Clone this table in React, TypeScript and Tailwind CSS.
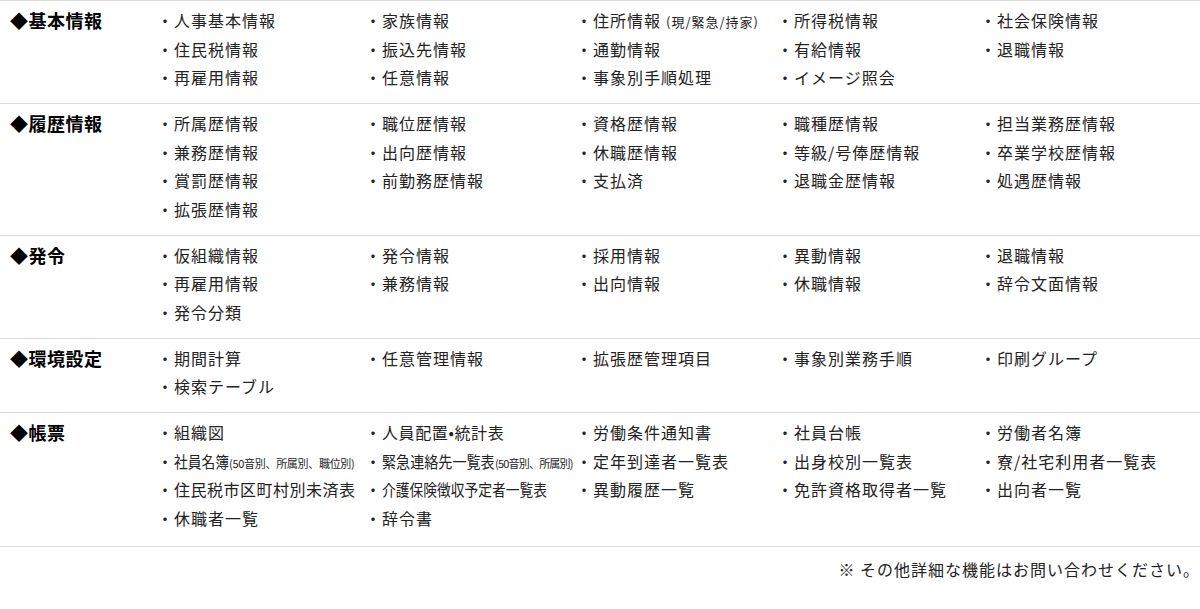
type Item = {
  text: string;
  cls?: string;
  note?: string;
  noteCls?: string;
};

type Section = { title: string; items: (string | Item)[] };

const SECTIONS: Section[] = [
  {
    title: "基本情報",
    items: [
      "人事基本情報",
      "家族情報",
      { text: "住所情報", note: "(現/緊急/持家)", noteCls: "ml-[5px] text-[13px] leading-none tracking-[1px]" },
      "所得税情報",
      "社会保険情報",
      "住民税情報",
      "振込先情報",
      "通勤情報",
      "有給情報",
      "退職情報",
      "再雇用情報",
      "任意情報",
      "事象別手順処理",
      "イメージ照会",
    ],
  },
  {
    title: "履歴情報",
    items: [
      "所属歴情報",
      "職位歴情報",
      "資格歴情報",
      "職種歴情報",
      "担当業務歴情報",
      "兼務歴情報",
      "出向歴情報",
      "休職歴情報",
      "等級/号俸歴情報",
      "卒業学校歴情報",
      "賞罰歴情報",
      "前勤務歴情報",
      "支払済",
      "退職金歴情報",
      "処遇歴情報",
      "拡張歴情報",
    ],
  },
  {
    title: "発令",
    items: [
      "仮組織情報",
      "発令情報",
      "採用情報",
      "異動情報",
      "退職情報",
      "再雇用情報",
      "兼務情報",
      "出向情報",
      "休職情報",
      "辞令文面情報",
      "発令分類",
    ],
  },
  {
    title: "環境設定",
    items: ["期間計算", "任意管理情報", "拡張歴管理項目", "事象別業務手順", "印刷グループ", "検索テーブル"],
  },
  {
    title: "帳票",
    items: [
      "組織図",
      { text: "人員配置•統計表", cls: "tracking-[0.6px]" },
      "労働条件通知書",
      "社員台帳",
      "労働者名簿",
      {
        // condensed to fit the cell
        text: "社員名簿",
        cls: "inline-block origin-left scale-x-[0.86] mr-[-9px] tracking-[0px]",
        note: "(50音別、所属別、職位別)",
        noteCls: "text-[11px] leading-none tracking-[-0.3px]",
      },
      {
        text: "緊急連絡先一覧表",
        cls: "inline-block origin-left scale-x-[0.88] mr-[-15px] tracking-[0px]",
        note: "(50音別、所属別)",
        noteCls: "text-[11px] leading-none tracking-[-0.8px]",
      },
      "定年到達者一覧表",
      "出身校別一覧表",
      "寮/社宅利用者一覧表",
      { text: "住民税市区町村別未済表", cls: "tracking-[0.5px]" },
      { text: "介護保険徴収予定者一覧表", cls: "inline-block origin-left scale-x-[0.86] tracking-[0px]" },
      "異動履歴一覧",
      "免許資格取得者一覧",
      "出向者一覧",
      "休職者一覧",
      "辞令書",
    ],
  },
];

function Entry({ item }: { item: string | Item }) {
  const it: Item = typeof item === "string" ? { text: item } : item;
  return (
    <div className="whitespace-nowrap text-[16px] text-[#222]">
      <span className="tracking-[1px]">・</span>
      <span className={it.cls ?? "tracking-[1px]"}>{it.text}</span>
      {it.note && <span className={it.noteCls}>{it.note}</span>}
    </div>
  );
}

export default function App() {
  return (
    <div className="w-[1200px] bg-white font-['Noto_Sans_CJK_JP',sans-serif] text-[#222]">
      {SECTIONS.map((s) => (
        <div key={s.title} className="flex border-t border-[#dcdcdc] pt-[5px] pb-[11.5px] leading-[28.5px]">
          <div className="w-[157px] shrink-0 pl-[10px] text-[18px] font-bold tracking-[0.5px] text-black">
            ◆{s.title}
          </div>
          <div className="grid flex-1 grid-cols-[208px_211px_201px_203px_1fr]">
            {s.items.map((it, i) => (
              <Entry key={i} item={it} />
            ))}
          </div>
        </div>
      ))}
      <div className="mt-[2px] border-t border-[#dcdcdc] pt-[8px] pr-0 text-right text-[16px] leading-[28.5px] tracking-[1px] text-[#222]">
        ※ その他詳細な機能はお問い合わせください。
      </div>
    </div>
  );
}
